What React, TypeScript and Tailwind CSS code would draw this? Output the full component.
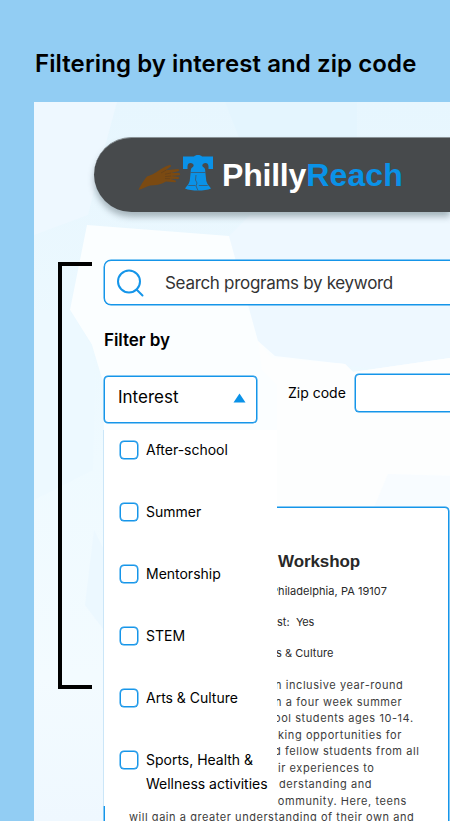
const interests = [
  "After-school",
  "Summer",
  "Mentorship",
  "STEM",
  "Arts & Culture",
  "Sports, Health & Wellness activities",
];

const summary = [
  { text: "n inclusive year-round", pad: "pl-[9px]" },
  { text: "n a four week summer", pad: "pl-[9px]" },
  { text: "ool students ages 10-14.", pad: "pl-[8px]" },
  { text: "king opportunities for", pad: "pl-[12px]" },
  { text: "d fellow students from all", pad: "pl-[8px]" },
  { text: "ir experiences to", pad: "pl-[12px]" },
  { text: "derstanding and", pad: "pl-[13px]" },
  { text: "community. Here, teens", pad: "pl-[5px]" },
];

function Backdrop() {
  return (
    <svg className="absolute inset-0 -z-10" width="416" height="719" viewBox="34 102 416 719">
      <defs>
        <linearGradient id="fade" x1="0" y1="0" x2="0" y2="1">
          <stop offset="0" stopColor="#e7f6fe" />
          <stop offset="0.5" stopColor="#effaff" />
          <stop offset="0.8" stopColor="#f3fbff" />
          <stop offset="1" stopColor="#eff8ff" />
        </linearGradient>
      </defs>
      <rect x="34" y="102" width="416" height="719" fill="url(#fade)" />
      <path d="M34 102H117L104 150L88 215L34 235Z" fill="#eef8ff" />
      <path d="M225 102H357V140H240Z" fill="#e4f5fe" />
      <path d="M229 236L250 215H450V375L345 366L272 358L258 341Z" fill="#eef8ff" />
      <path d="M87 225L229 236L258 341L275 356L345 364L353 372L450 358V510H104V385L92 345L70 310Z" fill="#fbfeff" />
      <path d="M258 341L272 358L345 364L353 372L450 358V475L388 474L373 510H277V385L262 370Z" fill="#fdfefe" />
      <path d="M388 474L450 476V510H373Z" fill="#f8fcff" />
      <path d="M94 530L104 550V630L85 605Z" fill="#ecf8ff" />
      <path d="M34 310H70L92 345L95 385L93 470L34 500Z" fill="#edf9ff" />
    </svg>
  );
}

function Hand() {
  return (
    <svg width="43" height="27" viewBox="0 0 43 27">
      <path
        d="M0.5 26C2 22.5 6 15.5 9 12.500C15 10.500 17 9 20 7C23.500 4.500 27 2.500 31 1.200C32.800 0.700 33.800 1.800 32.500 2.800L27.500 6.200L40 5C41.800 5.200 41.700 6.900 40 7.300L33 9L41 9C42.800 9.400 42.500 11.200 41 11.300L33 12L40.500 13C41.700 13.500 41.400 15 40 15L32 14.800L37.500 16.500C38.400 17.300 37.800 18.400 36.600 18.300L28 17.500C23 20.500 17 21.500 12 21.500C8 22.500 5 25 0.500 26Z"
        fill="#7b4a12"
      />
      <path d="M28 6.200L23 9M33 9L27 10.200M33 12L27 12.600M32 14.800L27 14.600" stroke="#5e3e1c" strokeWidth="0.6" />
    </svg>
  );
}

function Bell() {
  return (
    <svg width="30" height="36" viewBox="0 0 30 36">
      <path
        d="M0 1.500H11C12 0.500 13 0 15 0S18 0.500 19 1.500H30V14H25.500V11.500C25.500 9 23.800 7.800 21.500 8.200C19 8.800 18.700 11 20.500 12.200C22 13.300 22.300 14.500 22.300 17L23.300 26C24 29.500 26.500 31 28 33.500C25 35 20 35.500 15 35.500S5 35 2 33.500C3.500 31 6 29.500 6.700 26L7.700 17C7.700 14.500 8 13.300 9.500 12.200C11.300 11 11 8.800 8.500 8.200C6.200 7.800 4.500 9 4.500 11.500V14H0Z"
        fill="#0a92e8"
      />
      <path d="M7.600 17.500H22.400M5.300 30.500H12.500M15.800 30.500H24.700M13 20L12.500 25L14 28L13 31L15 35.500" fill="none" stroke="#3d5668" strokeWidth="0.8" />
    </svg>
  );
}

export default function App() {
  return (
    <main className="h-[821px] w-[450px] overflow-hidden bg-[#92cdf3] pl-[34px] font-['Inter',sans-serif] text-black">
      <h1 className="flex h-[102px] items-center whitespace-nowrap pl-px pt-[26px] text-[24px] font-semibold tracking-[0.09px]">
        Filtering by interest and zip code
      </h1>

      <div className="relative isolate h-[719px] overflow-hidden">
        <Backdrop />
        <div className="pl-[60px] pt-[35px]">
          <header className="flex h-[75px] items-center rounded-l-full border-t border-[#8a9296] bg-[#474a4c] pl-[44px] shadow-[0_5px_6px_rgba(60,75,85,0.38)]">
            <div className="mt-[5px]">
              <Hand />
            </div>
            <div className="ml-[2px] mt-[-4px]">
              <Bell />
            </div>
            <p className="ml-[9px] mt-[-1px] flex font-['Liberation_Sans',sans-serif] text-[32px] font-bold leading-none text-white">
              <span className="tracking-[-0.2px]">Philly</span>
              <span className="tracking-[0.15px] text-[#0a92e8]">Reach</span>
            </p>
          </header>
        </div>

        <div className="flex pl-[24px] pt-[48px]">
          <div className="mt-[2px] h-[427px] w-[34px] shrink-0 border-y-4 border-l-4 border-black" />

          <section className="ml-[12px] w-[380px] shrink-0">
            <div className="flex h-[45px] items-center rounded-l-[7px] border border-[#1595e9] bg-white pl-[12px] shadow-[0_0_0_0.5px_#1595e9]">
              <svg width="28" height="28" viewBox="0 0 28 28" fill="none" stroke="#1595e9" strokeWidth="2">
                <circle cx="12" cy="12.500" r="11" />
                <path d="M19.500 20.500L25.500 26.500" strokeLinecap="round" />
              </svg>
              <span className="ml-[20px] mt-[2px] text-[17px] tracking-[-0.3px] text-[#333]">Search programs by keyword</span>
            </div>

            <h2 className="mt-[25px] h-[20px] text-[17px] font-semibold leading-[20px] tracking-[-0.05px]">Filter by</h2>

            <div className="relative z-10 mt-[24px] flex">
              <div className="mt-[2px] w-[153px] shrink-0">
                <button className="flex h-[47px] w-full items-center justify-between rounded-[4px] border border-[#1595e9] bg-white pb-[4px] pl-[13px] pr-[10px] text-[17px] shadow-[0_0_0_0.5px_#1595e9]">
                  Interest
                  <svg className="mt-px" width="13" height="10" viewBox="0 0 13 10">
                    <path d="M6.500 0.500L12.500 9.500H0.500Z" fill="#0a92e8" />
                  </svg>
                </button>
                <ul className="absolute left-[-1px] top-[56px] h-[376px] w-[174px] border-l border-[#cbe6f8] bg-white pl-[16px] pt-[8px]">
                  {interests.map((name) => (
                    <li key={name} className="flex h-[62px] items-start">
                      <span className="mt-[3px] size-[18px] shrink-0 rounded-[4px] border border-[#1595e9] bg-white shadow-[0_0_0_0.5px_#1595e9]" />
                      <span className="ml-[8px] w-[126px] text-[14px] leading-[24px] tracking-[-0.01px]">{name}</span>
                    </li>
                  ))}
                </ul>
              </div>
              <span className="ml-[31px] mt-[8px] w-[59px] shrink-0 whitespace-nowrap text-[14px] leading-[22px]">Zip code</span>
              <div className="ml-[8px] h-[38px] w-[180px] shrink-0 rounded-[4px] border border-[#1595e9] bg-white shadow-[0_0_0_0.5px_#1595e9]" />
            </div>

            <article className="mt-[84px] h-[330px] w-[345px] rounded-[4px] border border-[#1595e9] bg-white text-[11px] text-[#282828] shadow-[0_0_0_0.5px_#1595e9]">
              <div className="whitespace-nowrap pl-[161px]">
                <h3 className="ml-[12px] mt-[44px] h-[20px] font-['Liberation_Sans',sans-serif] text-[17px] font-bold leading-[20px] tracking-[-0.1px]">
                  Workshop
                </h3>
                <div className="mt-[4px] leading-[31px] tracking-[0.05px]">
                  <p className="pl-[5px]">Philadelphia, PA 19107</p>
                  <p className="pl-[11px]">
                    st: <span className="ml-[3px] tracking-[-0.2px]">Yes</span>
                  </p>
                  <p className="pl-[10px]">s &amp; Culture</p>
                </div>
                <div className="mt-[8px] leading-[16.500px] tracking-[0.57px] text-[#3c3c3c]">
                  {summary.map((line) => (
                    <p key={line.text} className={line.pad}>
                      {line.text}
                    </p>
                  ))}
                </div>
              </div>
              <p className="whitespace-nowrap pl-[24px] leading-[16.500px] tracking-[0.55px] text-[#3c3c3c]">
                will gain a greater understanding of their own and
              </p>
            </article>
          </section>
        </div>
      </div>
    </main>
  );
}
